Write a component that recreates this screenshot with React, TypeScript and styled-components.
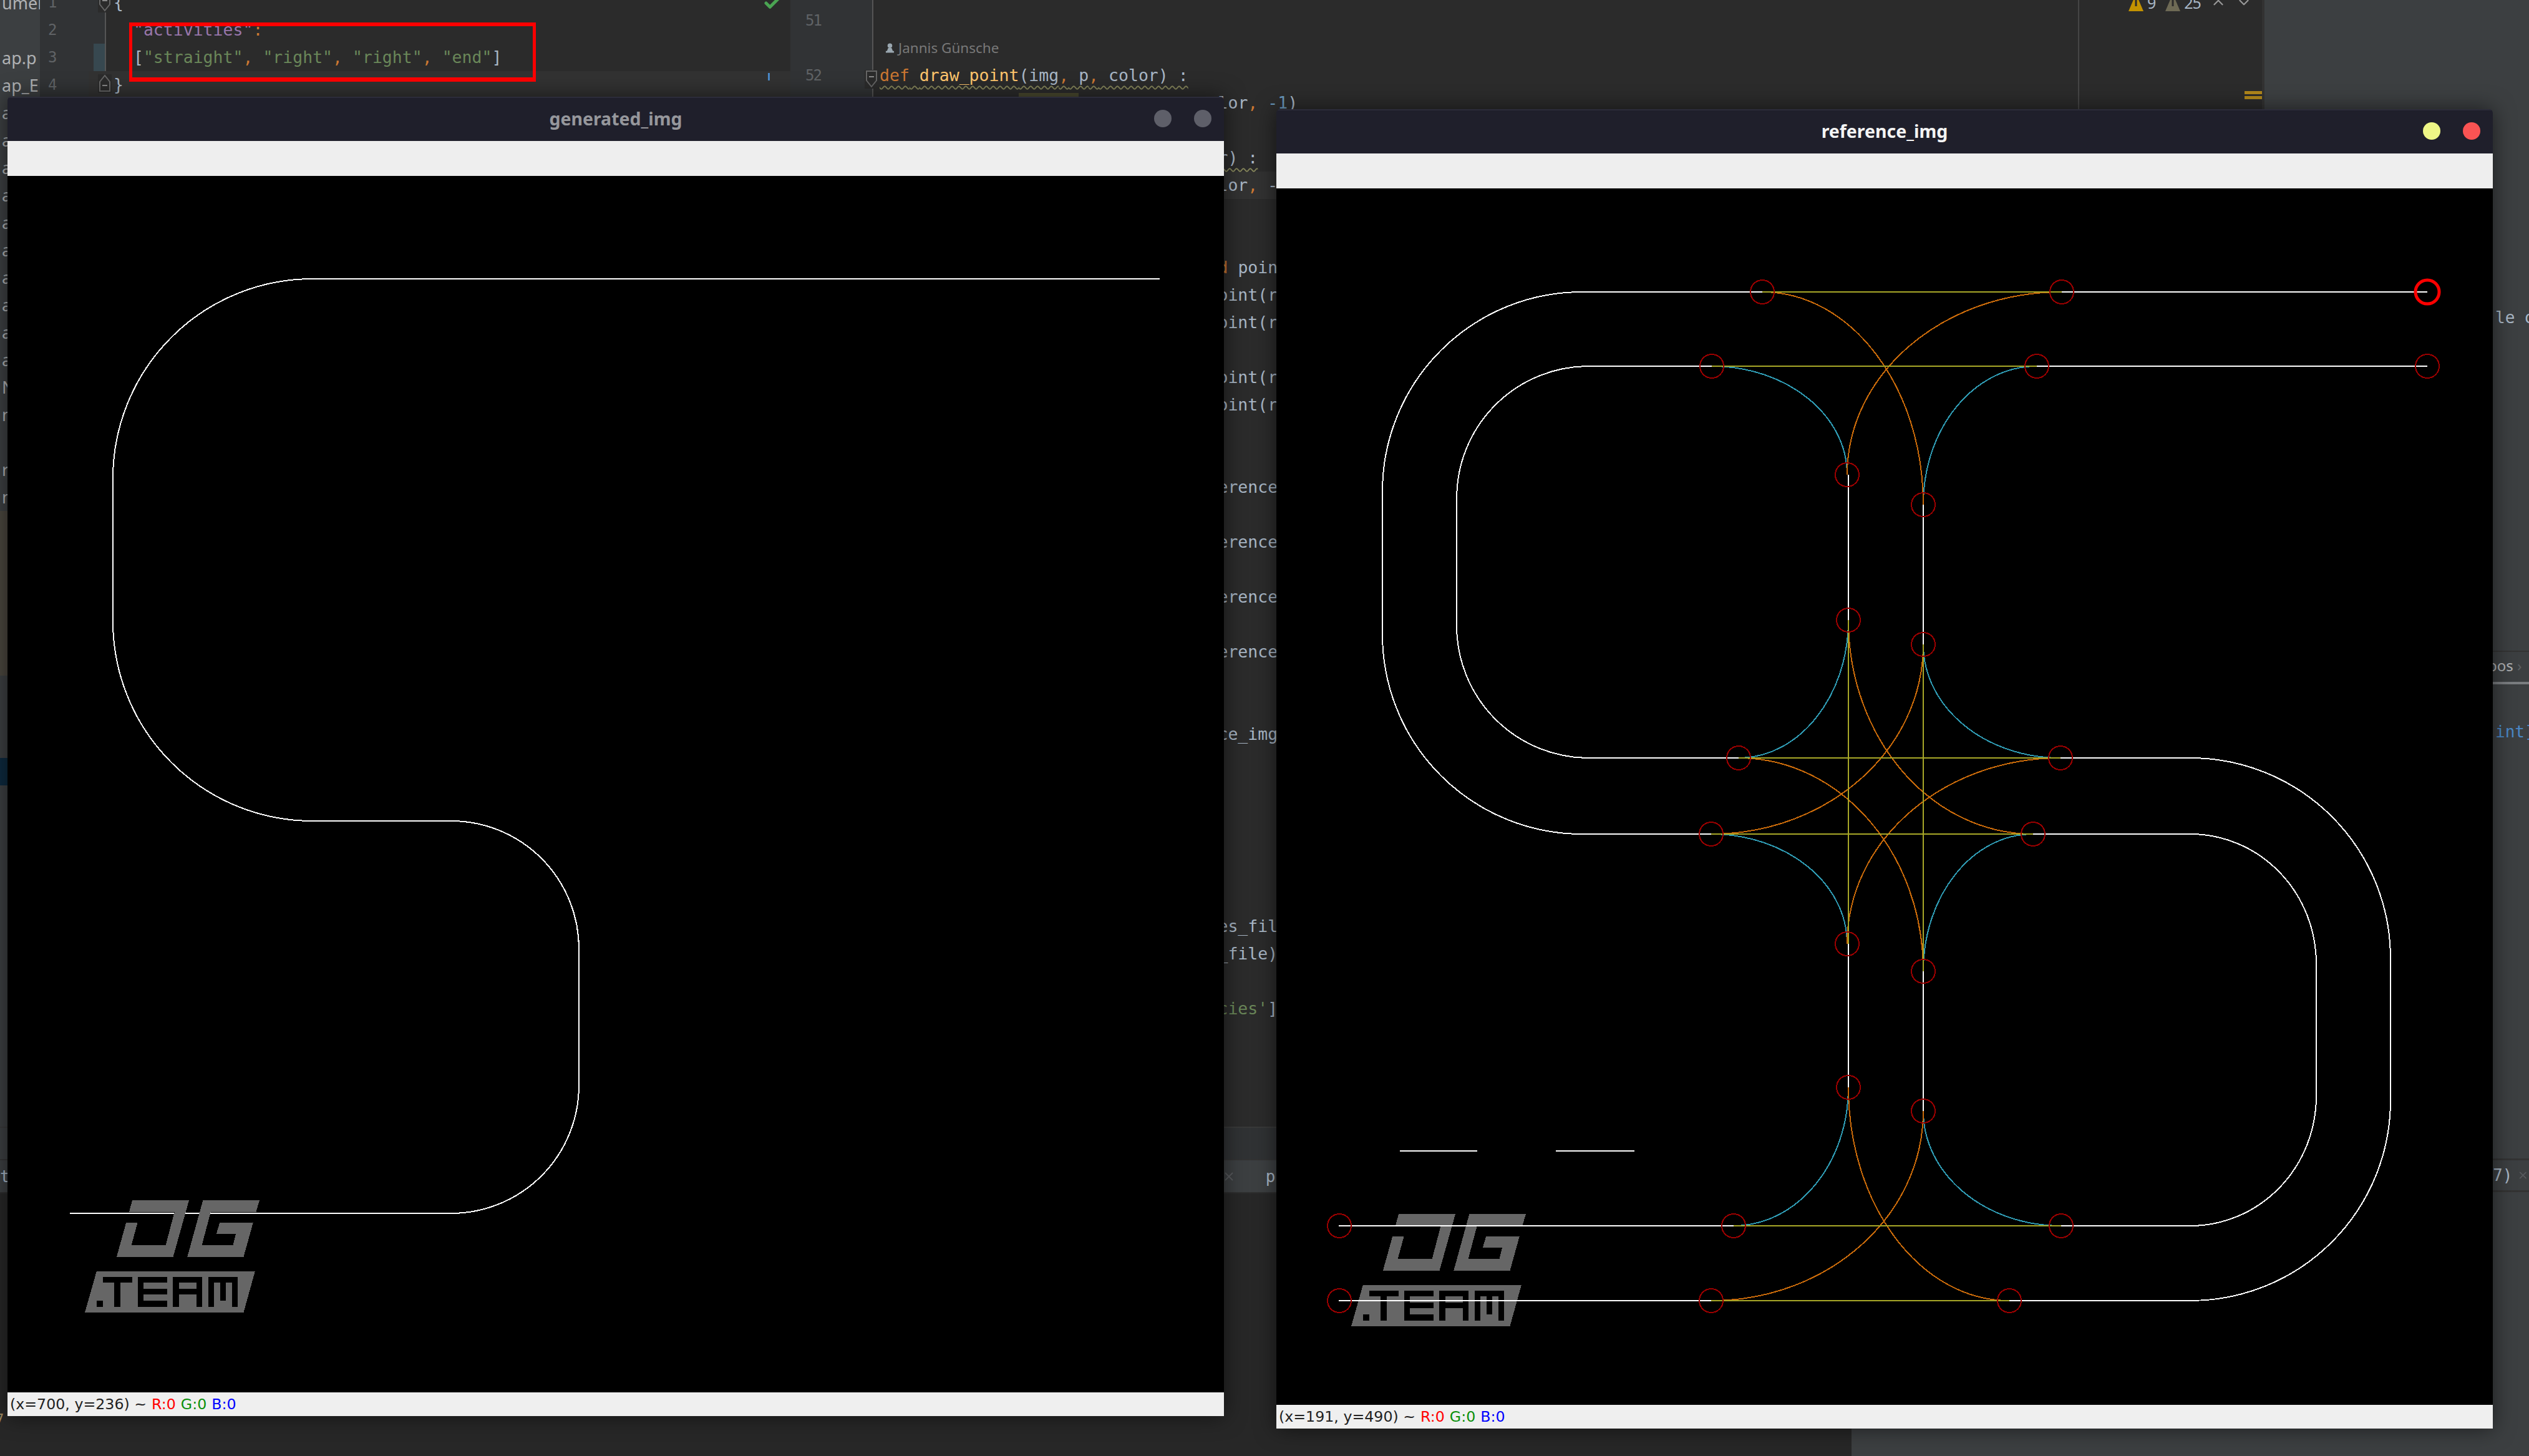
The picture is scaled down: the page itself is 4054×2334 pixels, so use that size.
import React from "react";
import styled, { createGlobalStyle } from "styled-components";
import { Check, ChevronDown, ChevronUp, X } from "lucide-react";

const MONO = `"DejaVu Sans Mono", "Liberation Mono", monospace`;
const UI = `"Noto Sans", "DejaVu Sans", sans-serif`;

const GlobalStyle = createGlobalStyle`
  html, body {
    margin: 0;
    padding: 0;
    background: #3c3f41;
  }
`;

const Desktop = styled.div`
  position: relative;
  width: 4054px;
  height: 2334px;
  overflow: hidden;
  display: flex;
  background: #3c3f41;
`;

const MainColumn = styled.div`
  width: 3630px;
  flex-shrink: 0;
  height: 100%;
  display: flex;
  flex-direction: column;
`;

const EditorArea = styled.div`
  height: 1806px;
  display: flex;
  overflow: hidden;
`;

const ProjectPanel = styled.div`
  width: 64px;
  flex-shrink: 0;
  margin-top: -17px;
  background: #3c3f41;
`;

const ProjectRow = styled.div<{ $bg?: string }>`
  height: 44px;
  padding-left: 3px;
  overflow: hidden;
  white-space: nowrap;
  font: 27px/44px ${UI};
  color: #afb1b3;
  background: ${({ $bg }) => $bg || "transparent"};
`;

const Pane = styled.div<{ $width?: number }>`
  position: relative;
  display: flex;
  ${({ $width }) => ($width ? `width: ${$width}px; flex-shrink: 0;` : "flex: 1;")}
  background: #2b2b2b;
`;

const Gutter = styled.div<{ $width: number; $top: number }>`
  width: ${({ $width }) => $width}px;
  flex-shrink: 0;
  padding-top: ${({ $top }) => $top}px;
  box-sizing: border-box;
  background: #313335;
  border-right: 2px solid #555;
`;

const RowStack = styled.div<{ $shift: number }>`
  margin-top: ${({ $shift }) => $shift}px;
`;

const LineNumber = styled.div<{ $left: number; $active?: boolean }>`
  height: 44px;
  padding-left: ${({ $left }) => $left}px;
  font: 24px/44px ${MONO};
  letter-spacing: -2px;
  color: #606366;
  background: ${({ $active }) => ($active ? "linear-gradient(90deg, transparent 86px, #374850 86px)" : "none")};
`;

const Code = styled.div<{ $top: number; $left: number }>`
  flex: 1;
  position: relative;
  padding-top: ${({ $top }) => $top}px;
  padding-left: ${({ $left }) => $left}px;
  font: 26.5px/44px ${MONO};
  color: #a9b7c6;
  white-space: pre;
`;

const CodeRow = styled.div<{ $current?: boolean }>`
  height: 44px;
  margin-left: -40px;
  padding-left: 40px;
  background: ${({ $current }) => ($current ? "#323232" : "transparent")};
`;

const Key = styled.span`
  color: #9876aa;
`;
const Str = styled.span`
  color: #6a8759;
`;
const Kw = styled.span`
  color: #cc7832;
`;
const Fn = styled.span`
  color: #ffc66d;
`;
const Num = styled.span`
  color: #6897bb;
`;
const Mark = styled.span`
  background: #4b4a30;
`;
const Squiggle = styled.span`
  text-decoration: underline wavy #85855a 2px;
  text-underline-offset: 7px;
`;

const AuthorRow = styled.div`
  height: 44px;
  display: flex;
  align-items: center;
  gap: 6px;
  padding-left: 9px;
  font: 22.5px/44px ${UI};
  color: #787878;
`;

const RedBox = styled.div`
  position: absolute;
  left: 143px;
  top: 36px;
  width: 652px;
  height: 95px;
  box-sizing: border-box;
  border: solid #ff0000;
  border-width: 6px 5px 7px 5px;
`;

const CheckBadge = styled.div`
  position: absolute;
  right: 14px;
  top: -10px;
  color: #4aa452;
`;

const ErrorTick = styled.div`
  position: absolute;
  right: 33px;
  top: 117px;
  width: 3px;
  height: 12px;
  background: #4a88c7;
`;

const Fold = styled.svg<{ $x: number; $y: number }>`
  position: absolute;
  left: ${({ $x }) => $x}px;
  top: ${({ $y }) => $y}px;
  background: #2b2b2b;
`;

const MarginRule = styled.div`
  position: absolute;
  left: 2064px;
  top: 0;
  bottom: 0;
  width: 2px;
  background: #454545;
`;

const InspectionBar = styled.div`
  position: absolute;
  left: 2144px;
  top: -11px;
  display: flex;
  align-items: center;
  gap: 15px;
  font: 25px/30px ${UI};
  color: #a9b7c6;
  letter-spacing: -1px;
`;

const WarningCount = styled.div`
  display: flex;
  align-items: center;
  gap: 5px;
`;

const Stripe = styled.div`
  position: absolute;
  left: 2331px;
  top: 146px;
  width: 28px;
  height: 13px;
  background: linear-gradient(#b0861a 5px, transparent 5px, transparent 8px, #b0861a 8px);
`;

const ScrollEdge = styled.div`
  position: absolute;
  right: 0;
  top: 0;
  bottom: 0;
  width: 4px;
  background: #323232;
`;

const ToolRow = styled.div`
  height: 52px;
  box-sizing: border-box;
  border-top: 2px solid #393939;
  background: linear-gradient(90deg, #3c3f41 64px, #303234 64px);
`;

const TabBar = styled.div`
  height: 53px;
  display: flex;
  align-items: center;
  background: #3c3f41;
  border-top: 2px solid #333;
  box-sizing: border-box;
  font: 26px/44px ${MONO};
  color: #a9b7c6;
`;

const TabText = styled.span<{ $left: number }>`
  margin-left: ${({ $left }) => $left}px;
`;

const TabClose = styled(X)<{ $left: number }>`
  margin-left: ${({ $left }) => $left}px;
  color: #585b5e;
`;

const BottomPanel = styled.div`
  flex: 1;
  padding-top: 350px;
  width: 2968px;
  background: #272727;
  border-top: 2px solid #2e2e2e;
  box-sizing: border-box;
  font: 24px/26px ${MONO};
  color: #a08a62;
  text-indent: -8px;
`;

const RightPanel = styled.div`
  flex: 1;
  min-width: 0;
  overflow: hidden;
  display: flex;
  flex-direction: column;
  font: 26px/44px ${MONO};
  color: #a9b7c6;
`;

const RightRow = styled.div<{ $top: number; $color?: string }>`
  margin-top: ${({ $top }) => $top}px;
  height: 44px;
  padding-left: 370px;
  white-space: pre;
  overflow: hidden;
  color: ${({ $color }) => $color || "inherit"};
`;

const RightTab = styled.div`
  height: 54px;
  margin-top: 512px;
  padding-left: 358px;
  box-sizing: border-box;
  border-top: 2px solid #333;
  border-bottom: 4px solid #7a7d80;
  white-space: pre;
  font: 24px/44px ${UI};
  color: #afb1b3;
`;

const RightTabBar = styled.div`
  margin-top: 662px;
  height: 54px;
  padding-left: 366px;
  box-sizing: border-box;
  display: flex;
  align-items: center;
  gap: 8px;
  border-top: 3px solid #333;
  border-bottom: 3px solid #333;
`;

const Dim = styled.span`
  color: #5c5f62;
`;

/* floating opencv windows */
const Window = styled.div<{ $x: number; $y: number }>`
  position: absolute;
  left: ${({ $x }) => $x}px;
  top: ${({ $y }) => $y}px;
  width: 1950px;
  display: flex;
  flex-direction: column;
  border-radius: 6px 6px 0 0;
  overflow: hidden;
  box-shadow: 0 0 34px rgba(0, 0, 0, 0.55);
`;

const TitleBar = styled.div<{ $active?: boolean }>`
  position: relative;
  height: 71px;
  box-sizing: border-box;
  padding-bottom: 3px;
  border-top: 2px solid #2c2c3a;
  background: #1f1f2b;
  display: flex;
  align-items: center;
  justify-content: center;
  font: 700 28.5px/1 ${UI};
  color: ${({ $active }) => ($active ? "#f4f4f4" : "#96979c")};
`;

const Dots = styled.div`
  position: absolute;
  right: 20px;
  top: 19px;
  display: flex;
  gap: 36px;
`;

const Dot = styled.div<{ $color: string }>`
  width: 28px;
  height: 28px;
  border-radius: 50%;
  background: ${({ $color }) => $color};
`;

const ToolStrip = styled.div`
  height: 56px;
  background: #eeeeee;
`;

const Canvas = styled.svg`
  display: block;
  width: 1950px;
  height: 1950px;
  background: #000;
`;

const StatusBar = styled.div`
  height: 38px;
  display: flex;
  align-items: center;
  gap: 8px;
  padding-left: 4px;
  background: #efefef;
  font: 23.7px/38px "DejaVu Sans", sans-serif;
  color: #222;
  white-space: pre;
`;

const Channel = styled.span<{ $color: string }>`
  color: ${({ $color }) => $color};
`;

type Point = { x: number; y: number };

const WHITE = "#ffffff";
const OLIVE = "#a8a828";
const ORANGE = "#c96a0a";
const TEAL = "#2f9bb3";
const RED = "#9b0000";

// quarter curve between two points, tangent to the axes at both ends
const quarter = (x1: number, y1: number, x2: number, y2: number, startsVertical: boolean) => {
  const k = 0.5523;
  const dx = x2 - x1;
  const dy = y2 - y1;
  return startsVertical
    ? `M${x1} ${y1}C${x1} ${y1 + k * dy} ${x2 - k * dx} ${y2} ${x2} ${y2}`
    : `M${x1} ${y1}C${x1 + k * dx} ${y1} ${x2} ${y2 - k * dy} ${x2} ${y2}`;
};

const whitePaths = [
  "M1845 166H1259",
  "M779 166H490A320 320 0 0 0 170 486V715A320 320 0 0 0 490 1035H697",
  "M1845 285H1219",
  "M698 285H501A212 212 0 0 0 289 497V701A212 212 0 0 0 501 913H741",
  "M1257 913H1465A321 321 0 0 1 1786 1234V1462A321 321 0 0 1 1465 1783H1175",
  "M1213 1035H1465A202 208 0 0 1 1667 1243V1455A202 208 0 0 1 1465 1663H1258",
  "M917 459V692",
  "M917 1211V1441",
  "M1037 507V731",
  "M1037 1255V1479",
  "M100 1663H733",
  "M100 1783H697",
  "M198 1543H322",
  "M448 1543H574",
];

const olivePaths = [
  "M779 166H1259",
  "M698 285H1219",
  "M741 913H1257",
  "M697 1035H1213",
  "M733 1663H1258",
  "M697 1783H1175",
  "M917 692V1211",
  "M1037 731V1255",
];

const orangePaths = [
  quarter(779, 166, 1037, 507, false),
  quarter(1259, 166, 915, 459, false),
  quarter(917, 692, 1213, 1035, true),
  quarter(1037, 731, 697, 1035, true),
  quarter(741, 913, 1037, 1255, false),
  quarter(1257, 913, 915, 1211, false),
  quarter(917, 1441, 1175, 1783, true),
  quarter(1037, 1479, 697, 1783, true),
];

const tealPaths = [
  quarter(698, 285, 915, 459, false),
  quarter(1219, 285, 1037, 507, false),
  quarter(917, 692, 741, 913, true),
  quarter(1037, 731, 1257, 913, true),
  quarter(697, 1035, 915, 1211, false),
  quarter(1213, 1035, 1037, 1255, false),
  quarter(917, 1441, 733, 1663, true),
  quarter(1037, 1479, 1258, 1663, true),
];

const waypoints: Point[] = [
  { x: 779, y: 166 },
  { x: 1259, y: 166 },
  { x: 698, y: 285 },
  { x: 1219, y: 285 },
  { x: 1845, y: 285 },
  { x: 915, y: 459 },
  { x: 1037, y: 507 },
  { x: 917, y: 692 },
  { x: 1037, y: 731 },
  { x: 741, y: 913 },
  { x: 1257, y: 913 },
  { x: 697, y: 1035 },
  { x: 1213, y: 1035 },
  { x: 915, y: 1211 },
  { x: 1037, y: 1255 },
  { x: 917, y: 1441 },
  { x: 1037, y: 1479 },
  { x: 101, y: 1663 },
  { x: 733, y: 1663 },
  { x: 1258, y: 1663 },
  { x: 101, y: 1783 },
  { x: 697, y: 1783 },
  { x: 1175, y: 1783 },
];

const generatedTrack =
  "M1847 165H489A320 320 0 0 0 169 485V714A320 320 0 0 0 489 1034H711A205 205 0 0 1 916 1239V1458A205 205 0 0 1 711 1663H100";

// logo is traced on a 2.24 x 2.936 grid, hence the scale on the group
const TeamLogo = ({ x, y }: { x: number; y: number }) => (
  <g transform={`translate(${x} ${y}) scale(0.4464 0.3406)`} shapeRendering="crispEdges">
    <polygon
      fill="#666"
      points="318,429 522,429 465,695 262,695 296,535 337,535 315,641 438,641 470,483 307,483"
    />
    <polygon
      fill="#666"
      points="572,429 775,429 763,483 600,483 568,641 680,641 690,588 620,588 632,535 752,535 718,695 516,695"
    />
    <polygon fill="#666" points="190,763 759,763 718,957 148,957" />
    <path
      fill="#000"
      fillRule="evenodd"
      d="M190 902H212V930H190ZM212 790H317V817H276V930H254V817H212ZM338 790H444V817H358V845H444V873H358V902H444V930H338ZM464 790H570V930H549V873H485V930H464ZM485 817V845H549V817ZM591 790H697V930H676V817H655V902H633V817H612V930H591Z"
    />
  </g>
);

const foldIcon = (
  <>
    <path d="M3 2H19V17L11 27L3 17Z" fill="none" stroke="#666" strokeWidth="2" />
    <path d="M7 11H15" stroke="#888" strokeWidth="2" />
  </>
);

const foldIconUp = (
  <>
    <path d="M3 27H19V12L11 2L3 12Z" fill="none" stroke="#666" strokeWidth="2" />
    <path d="M7 18H15" stroke="#888" strokeWidth="2" />
  </>
);

const warningIcon = (color: string) => (
  <svg width="26" height="28" viewBox="0 0 26 28">
    <path d="M13 0L25 28H1Z" fill={color} />
    <path d="M11.5 10H14.5V20H11.5Z" fill="#2b2b2b" />
  </svg>
);

const projectRows: { text?: string; bg?: string }[] = [
  { text: "umer" },
  {},
  { text: "ap.p" },
  { text: "ap_E" },
  ...Array.from({ length: 10 }, () => ({ text: "a" })),
  { text: "N" },
  { text: "n" },
  {},
  { text: "r" },
  { text: "n" },
  ...Array.from({ length: 6 }, () => ({ bg: "#4a463e" })),
  {},
  {},
  {},
  { bg: "#0d293e" },
];

const pad = (col: number) => " ".repeat(col);

// code that peeks out between the two windows, keyed by row under the def line
const peekRows: Record<number, React.ReactNode> = {
  0: (
    <>
      {pad(14)}
      <Mark>{pad(6)}</Mark>
      {pad(14)}lor<Kw>,</Kw> <Num>-1</Num>)
    </>
  ),
  2: (
    <>
      {pad(34)}
      <Squiggle>r) :</Squiggle>
    </>
  ),
  3: (
    <>
      {pad(34)}lor<Kw>,</Kw> -
    </>
  ),
  6: (
    <>
      {pad(34)}
      <Kw>d</Kw> point
    </>
  ),
  7: <>{pad(34)}oint(r</>,
  8: <>{pad(34)}oint(r</>,
  10: <>{pad(34)}oint(r</>,
  11: <>{pad(34)}oint(r</>,
  14: <>{pad(34)}erence</>,
  16: <>{pad(34)}erence</>,
  18: <>{pad(34)}erence</>,
  20: <>{pad(34)}erence</>,
  23: <>{pad(34)}ce_img</>,
  30: <>{pad(34)}es_fil</>,
  31: <>{pad(34)}_file)</>,
  33: (
    <>
      {pad(34)}
      <Str>cies'</Str>]
    </>
  ),
};

const JsonEditor = () => (
  <Pane $width={1203}>
    <Gutter $width={106} $top={0}>
      <RowStack $shift={-18}>
        <LineNumber $left={13}>1</LineNumber>
        <LineNumber $left={13}>2</LineNumber>
        <LineNumber $left={13} $active>
          3
        </LineNumber>
        <LineNumber $left={13}>4</LineNumber>
      </RowStack>
    </Gutter>
    <Code $top={0} $left={12}>
      <RowStack $shift={-18}>
        <CodeRow>{"{"}</CodeRow>
        <CodeRow>
          {"  "}
          <Key>"activities"</Key>
          <Kw>:</Kw>
        </CodeRow>
        <CodeRow>
          {"  "}[<Str>"straight"</Str>
          <Kw>,</Kw> <Str>"right"</Str>
          <Kw>,</Kw> <Str>"right"</Str>
          <Kw>,</Kw> <Str>"end"</Str>]
        </CodeRow>
        <CodeRow $current>{"}"}</CodeRow>
      </RowStack>
    </Code>
    <Fold $x={93} $y={-10} width={22} height={30} viewBox="0 0 22 30">
      {foldIcon}
    </Fold>
    <Fold $x={93} $y={119} width={22} height={30} viewBox="0 0 22 30">
      {foldIconUp}
    </Fold>
    <RedBox />
    <CheckBadge>
      <Check size={30} strokeWidth={4} />
    </CheckBadge>
    <ErrorTick />
  </Pane>
);

const PythonEditor = () => (
  <Pane>
    <Gutter $width={133} $top={11}>
      <LineNumber $left={24}>51</LineNumber>
      <LineNumber $left={24} />
      <LineNumber $left={24}>52</LineNumber>
    </Gutter>
    <Code $top={11} $left={10}>
      <CodeRow />
      <AuthorRow>
        <svg width="15" height="18" viewBox="0 0 16 18">
          <circle cx="8" cy="5" r="4" fill="#9aa7b0" />
          <path d="M5 9H11L13 14H15V17H1V14H3Z" fill="#9aa7b0" />
        </svg>
        Jannis Günsche
      </AuthorRow>
      <CodeRow>
        <Squiggle>
          <Kw>def</Kw> <Fn>draw_point</Fn>(img<Kw>,</Kw> p<Kw>,</Kw> color) :
        </Squiggle>
      </CodeRow>
      {Array.from({ length: 36 }, (_, row) => (
        <CodeRow key={row} $current={row === 3}>
          {peekRows[row]}
        </CodeRow>
      ))}
    </Code>
    <Fold $x={119} $y={112} width={22} height={30} viewBox="0 0 22 30">
      {foldIcon}
    </Fold>
    <MarginRule />
    <InspectionBar>
      <WarningCount>{warningIcon("#c39200")}9</WarningCount>
      <WarningCount>{warningIcon("#6e6a55")}25</WarningCount>
      <ChevronUp size={26} color="#999" />
      <ChevronDown size={26} color="#999" />
    </InspectionBar>
    <Stripe />
    <ScrollEdge />
  </Pane>
);

const CvWindow = ({
  x,
  y,
  title,
  active,
  dots,
  status,
  children,
}: {
  x: number;
  y: number;
  title: string;
  active?: boolean;
  dots: [string, string];
  status: string;
  children: React.ReactNode;
}) => (
  <Window $x={x} $y={y}>
    <TitleBar $active={active}>
      {title}
      <Dots>
        <Dot $color={dots[0]} />
        <Dot $color={dots[1]} />
      </Dots>
    </TitleBar>
    <ToolStrip />
    <Canvas viewBox="0 0 1950 1950">{children}</Canvas>
    <StatusBar>
      {status}
      <Channel $color="#ff0000">R:0</Channel>
      <Channel $color="#0a8f0a">G:0</Channel>
      <Channel $color="#0000ff">B:0</Channel>
    </StatusBar>
  </Window>
);

const strokes = (paths: string[], color: string) =>
  paths.map((d) => <path key={d} d={d} fill="none" stroke={color} strokeWidth={2} shapeRendering="crispEdges" />);

const App = () => {
  return (
    <Desktop>
      <GlobalStyle />
      <MainColumn>
        <EditorArea>
          <ProjectPanel>
            {projectRows.map((row, i) => (
              <ProjectRow key={i} $bg={row.bg}>
                {row.text}
              </ProjectRow>
            ))}
          </ProjectPanel>
          <JsonEditor />
          <PythonEditor />
        </EditorArea>
        <ToolRow />
        <TabBar>
          <TabText $left={0}>t</TabText>
          <TabClose $left={1943} size={22} />
          <TabText $left={48}>p</TabText>
        </TabBar>
        <BottomPanel>7</BottomPanel>
      </MainColumn>
      <RightPanel>
        <RightRow $top={487}>le or</RightRow>
        <RightTab>
          pos <Dim>›</Dim>
        </RightTab>
        <RightRow $top={54} $color="#4a88c7">
          int]
        </RightRow>
        <RightTabBar>
          7)
          <X size={22} color="#585b5e" />
        </RightTabBar>
      </RightPanel>

      <CvWindow x={12} y={155} title="generated_img" dots={["#5e5f69", "#5e5f69"]} status="(x=700, y=236) ~">
        {strokes([generatedTrack], WHITE)}
        <TeamLogo x={58} y={1496} />
      </CvWindow>

      <CvWindow
        x={2046}
        y={175}
        title="reference_img"
        active
        dots={["#eef686", "#f95353"]}
        status="(x=191, y=490) ~"
      >
        <TeamLogo x={54} y={1498} />
        {strokes(whitePaths, WHITE)}
        {strokes(tealPaths, TEAL)}
        {strokes(orangePaths, ORANGE)}
        {strokes(olivePaths, OLIVE)}
        {waypoints.map((p) => (
          <circle
            key={`${p.x}-${p.y}`}
            cx={p.x}
            cy={p.y}
            r={19}
            fill="none"
            stroke={RED}
            strokeWidth={2}
            shapeRendering="crispEdges"
          />
        ))}
        <circle cx={1845} cy={166} r={19} fill="none" stroke="#ff0000" strokeWidth={5} />
      </CvWindow>
    </Desktop>
  );
};

export default App;
